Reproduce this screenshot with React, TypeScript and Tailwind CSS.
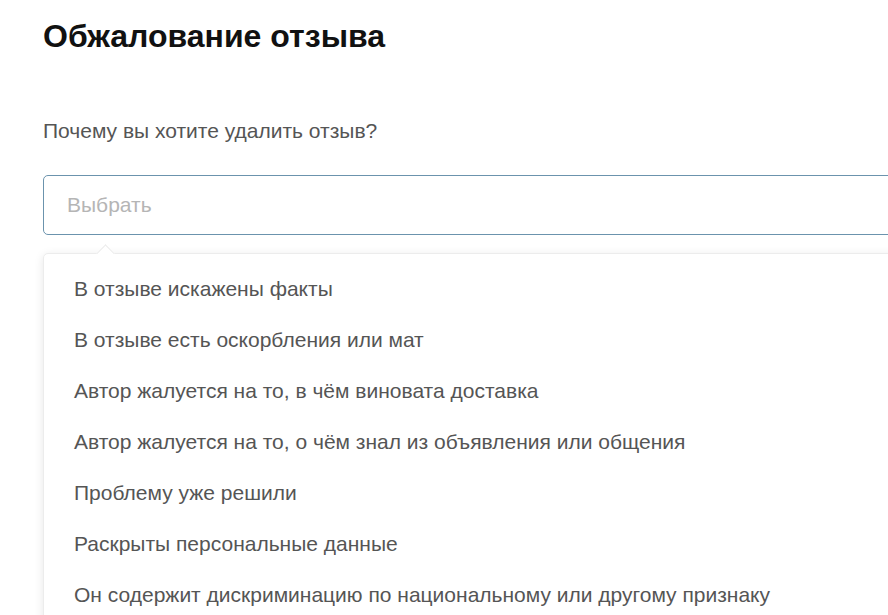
import React from 'react';

const reasons = [
  'В отзыве искажены факты',
  'В отзыве есть оскорбления или мат',
  'Автор жалуется на то, в чём виновата доставка',
  'Автор жалуется на то, о чём знал из объявления или общения',
  'Проблему уже решили',
  'Раскрыты персональные данные',
  'Он содержит дискриминацию по национальному или другому признаку',
];

const App: React.FC = () => {
  return (
    <div className="w-[888px] h-[615px] overflow-hidden bg-white font-['Liberation_Sans',Arial,sans-serif]">
      <div className="w-[920px] pl-[43px]">
        <h1 className="pt-[16px] text-[32px] leading-[40px] font-bold text-[#111]">Обжалование отзыва</h1>
        <p className="mt-[62px] text-[21px] leading-[26px] text-[#555]">Почему вы хотите удалить отзыв?</p>
        <div className="mt-[31px] h-[60px] rounded-[5px] border border-[#6b93ad] flex items-center pl-[23px]">
          <span className="text-[21px] text-[#b5b5b5]">Выбрать</span>
        </div>
        <div className="relative mt-[18px] rounded-[5px] bg-white border border-[#ececec] shadow-[0_2px_10px_rgba(0,0,0,0.10)] pt-[22px] pb-[30px] pl-[30px]">
          <div className="absolute left-[55px] top-[-7px] w-[13px] h-[13px] rotate-45 bg-white border-l border-t border-[#ececec]" />
          <ul className="flex flex-col gap-[25px]">
            {reasons.map((r) => (
              <li key={r} className="text-[21px] leading-[26px] text-[#555] cursor-pointer">
                {r}
              </li>
            ))}
          </ul>
        </div>
      </div>
    </div>
  );
};

export default App;
